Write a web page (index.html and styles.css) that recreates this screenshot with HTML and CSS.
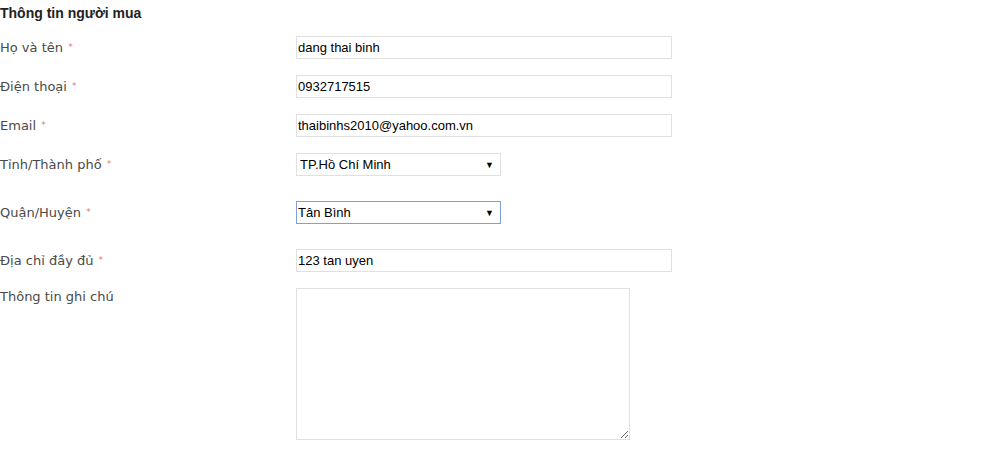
FILE: index.html
```html
<!DOCTYPE html>
<html>
<head>
<meta charset="utf-8">
<link rel="stylesheet" href="styles.css">
</head>
<body>
<div class="form">
  <h3 class="title">Thông tin người mua</h3>
  <div class="row">
    <label class="lbl">Họ và tên <span class="req">*</span></label>
    <div class="field"><input class="txt" type="text" value="dang thai binh"></div>
  </div>
  <div class="row">
    <label class="lbl">Điện thoại <span class="req">*</span></label>
    <div class="field"><input class="txt" type="text" value="0932717515"></div>
  </div>
  <div class="row">
    <label class="lbl">Email <span class="req">*</span></label>
    <div class="field"><input class="txt" type="text" value="thaibinhs2010@yahoo.com.vn"></div>
  </div>
  <div class="row row-sel">
    <label class="lbl">Tỉnh/Thành phố <span class="req">*</span></label>
    <div class="field"><div class="sel"><span>TP.Hồ Chí Minh</span><span class="arrow">▼</span></div></div>
  </div>
  <div class="row row-sel">
    <label class="lbl">Quận/Huyện <span class="req">*</span></label>
    <div class="field"><div class="sel sel-focus"><span>Tân Bình</span><span class="arrow">▼</span></div></div>
  </div>
  <div class="row">
    <label class="lbl">Địa chỉ đầy đủ <span class="req">*</span></label>
    <div class="field"><input class="txt" type="text" value="123 tan uyen"></div>
  </div>
  <div class="row row-top">
    <label class="lbl lbl-top">Thông tin ghi chú</label>
    <div class="field"><textarea class="area"></textarea></div>
  </div>
</div>
</body>
</html>
```
FILE: styles.css
```css
html, body {
  margin: 0;
  padding: 0;
  background: #fff;
}
.form {
  font-family: "Liberation Sans", Arial, sans-serif;
  font-size: 13px;
  color: #000;
}
.title {
  margin: 0;
  padding-top: 5px;
  height: 36px;
  box-sizing: border-box;
  font-size: 14px;
  font-weight: bold;
  color: #222;
  line-height: 16px;
}
.row {
  display: grid;
  grid-template-columns: 296px 1fr;
  align-items: center;
  margin-bottom: 16px;
}
.row-sel {
  margin-bottom: 25px;
}
.row-top {
  align-items: start;
}
.lbl {
  font-family: "DejaVu Sans", Verdana, sans-serif;
  font-size: 13px;
  color: #4a4a4a;
  line-height: 16px;
}
.lbl-top {
  padding-top: 1px;
}
.req {
  color: #e07a7a;
  font-size: 9px;
  vertical-align: 2px;
  margin-left: 1px;
}
.field {
  display: flex;
}
.txt {
  width: 376px;
  height: 23px;
  box-sizing: border-box;
  border: 1px solid #e0e0e0;
  padding: 0 1px;
  margin: 0;
  font-family: "Liberation Sans", Arial, sans-serif;
  font-size: 13px;
  color: #000;
  outline: none;
}
.sel {
  width: 205px;
  height: 23px;
  box-sizing: border-box;
  border: 1px solid #e0e0e0;
  display: flex;
  align-items: center;
  justify-content: space-between;
  padding: 0 6px 0 3px;
  font-size: 13px;
  color: #000;
}
.sel-focus {
  border-color: #7aa2d8;
  padding-left: 1px;
}
.arrow {
  font-size: 9px;
}
.area {
  width: 334px;
  height: 152px;
  box-sizing: border-box;
  border: 1px solid #e0e0e0;
  margin: 0;
  padding: 2px;
  resize: both;
  font-family: "Liberation Sans", Arial, sans-serif;
  outline: none;
}
```
